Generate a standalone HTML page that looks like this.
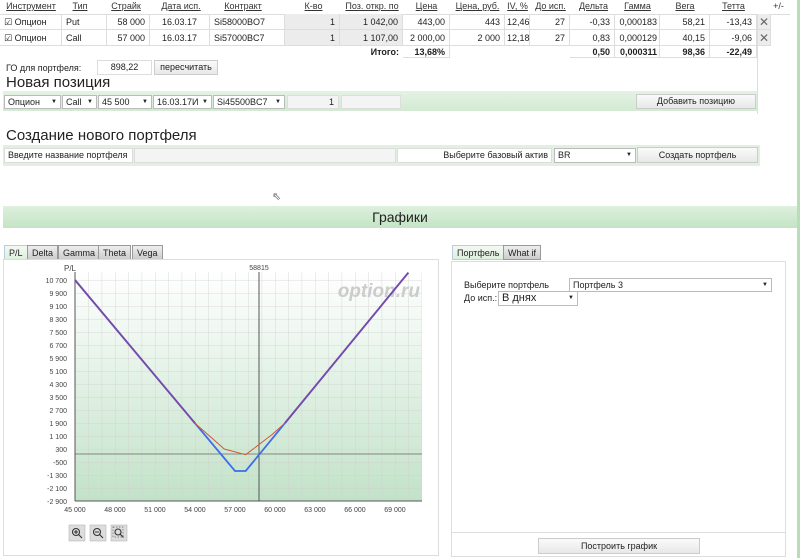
<!DOCTYPE html>
<html><head><meta charset="utf-8"><style>
*{box-sizing:border-box;margin:0;padding:0}
body{width:800px;height:558px;overflow:hidden;background:#fff;font-family:"Liberation Sans","DejaVu Sans",sans-serif;font-size:9px;color:#222;position:relative}
.a{position:absolute;white-space:nowrap}
.h{text-decoration:underline;color:#333;text-align:center}
.c{position:absolute;height:16px;line-height:16px;padding:0 4px;border-right:1px solid #ddd;border-bottom:1px solid #ddd;white-space:nowrap}
.r{text-align:right}
.g{background:#ececec}
.sel{position:absolute;height:14px;line-height:13px;border:1px solid #bbb;background:#fff;padding:0 3px;font-size:9px}
.sel:after{content:"▼";position:absolute;right:3px;font-size:6px}
.btn{position:absolute;border:1px solid #ccc;background:linear-gradient(#fafafa,#e8e8e8);text-align:center;font-size:9px}
.tab{position:absolute;top:245px;height:15px;line-height:14px;border:1px solid #999;background:linear-gradient(#eee,#ccc);padding:0 4px;font-size:9px}
.tab.on{background:linear-gradient(#f4f9f4,#dcefdc);border-color:#bcd}
</style></head><body>
<div class="a" style="left:797px;top:0;width:3px;height:558px;background:#b9dcb9"></div>
<div class="a h" style="left:0;top:1px;width:62px">Инструмент</div>
<div class="a h" style="left:62px;top:1px;width:36px">Тип</div>
<div class="a h" style="left:105px;top:1px;width:42px">Страйк</div>
<div class="a h" style="left:150px;top:1px;width:62px">Дата исп.</div>
<div class="a h" style="left:212px;top:1px;width:62px">Контракт</div>
<div class="a h" style="left:285px;top:1px;width:57px">К-во</div>
<div class="a h" style="left:342px;top:1px;width:60px">Поз. откр. по</div>
<div class="a h" style="left:403px;top:1px;width:47px">Цена</div>
<div class="a h" style="left:450px;top:1px;width:55px">Цена, руб.</div>
<div class="a h" style="left:505px;top:1px;width:25px">IV, %</div>
<div class="a h" style="left:531px;top:1px;width:39px">До исп.</div>
<div class="a h" style="left:572px;top:1px;width:43px">Дельта</div>
<div class="a h" style="left:615px;top:1px;width:45px">Гамма</div>
<div class="a h" style="left:660px;top:1px;width:50px">Вега</div>
<div class="a h" style="left:710px;top:1px;width:47px">Тетта</div>
<div class="a" style="left:757px;top:1px;width:43px;text-align:center;color:#333">+/-</div>
<div class="a" style="left:0;top:14px;width:790px;height:1px;background:#ddd"></div>
<div class="c" style="left:0;top:14px;width:62px">☑ Опцион</div><div class="c" style="left:62px;top:14px;width:45px">Put</div><div class="c r" style="left:107px;top:14px;width:43px">58 000</div><div class="c" style="left:150px;top:14px;width:60px;text-align:center">16.03.17</div><div class="c" style="left:210px;top:14px;width:75px">Si58000BO7</div><div class="c r g" style="left:285px;top:14px;width:55px">1</div><div class="c r g" style="left:340px;top:14px;width:63px">1 042,00</div><div class="c r" style="left:403px;top:14px;width:47px">443,00</div><div class="c r" style="left:450px;top:14px;width:55px">443</div><div class="c r" style="left:505px;top:14px;width:25px;padding:0 2px">12,46</div><div class="c r" style="left:530px;top:14px;width:40px">27</div><div class="c r" style="left:570px;top:14px;width:45px">-0,33</div><div class="c r" style="left:615px;top:14px;width:45px;padding:0 2px">0,000183</div><div class="c r" style="left:660px;top:14px;width:50px">58,21</div><div class="c r" style="left:710px;top:14px;width:47px">-13,43</div><div class="c g" style="left:757px;top:14px;width:14px;color:#666;font-size:12px;padding:0 2px">✕</div>
<div class="c" style="left:0;top:30px;width:62px">☑ Опцион</div><div class="c" style="left:62px;top:30px;width:45px">Call</div><div class="c r" style="left:107px;top:30px;width:43px">57 000</div><div class="c" style="left:150px;top:30px;width:60px;text-align:center">16.03.17</div><div class="c" style="left:210px;top:30px;width:75px">Si57000BC7</div><div class="c r g" style="left:285px;top:30px;width:55px">1</div><div class="c r g" style="left:340px;top:30px;width:63px">1 107,00</div><div class="c r" style="left:403px;top:30px;width:47px">2 000,00</div><div class="c r" style="left:450px;top:30px;width:55px">2 000</div><div class="c r" style="left:505px;top:30px;width:25px;padding:0 2px">12,18</div><div class="c r" style="left:530px;top:30px;width:40px">27</div><div class="c r" style="left:570px;top:30px;width:45px">0,83</div><div class="c r" style="left:615px;top:30px;width:45px;padding:0 2px">0,000129</div><div class="c r" style="left:660px;top:30px;width:50px">40,15</div><div class="c r" style="left:710px;top:30px;width:47px">-9,06</div><div class="c g" style="left:757px;top:30px;width:14px;color:#666;font-size:12px;padding:0 2px">✕</div>
<div class="c r" style="left:340px;top:46px;width:63px;font-weight:bold;border:0;height:12px;line-height:12px">Итого:</div>
<div class="c r" style="left:403px;top:46px;width:47px;font-weight:bold;height:12px;line-height:12px">13,68%</div>
<div class="c r" style="left:570px;top:46px;width:45px;font-weight:bold;height:12px;line-height:12px">0,50</div>
<div class="c r" style="left:615px;top:46px;width:45px;font-weight:bold;height:12px;line-height:12px;padding:0 2px">0,000311</div>
<div class="c r" style="left:660px;top:46px;width:50px;font-weight:bold;height:12px;line-height:12px">98,36</div>
<div class="c r" style="left:710px;top:46px;width:47px;font-weight:bold;height:12px;line-height:12px">-22,49</div>
<div class="a" style="left:757px;top:14px;width:1px;height:100px;background:#ddd"></div>
<div class="a" style="left:6px;top:63px">ГО для портфеля:</div>
<div class="a" style="left:97px;top:60px;width:55px;height:15px;border:1px solid #ddd;text-align:center;line-height:13px">898,22</div>
<div class="btn" style="left:154px;top:60px;width:64px;height:15px;line-height:13px">пересчитать</div>
<div class="a" style="left:6px;top:74px;font-size:15px">Новая позиция</div>
<div class="a" style="left:3px;top:91px;width:754px;height:20px;background:linear-gradient(#e4f2e4,#d3ead3)"></div>
<div class="sel" style="left:4px;top:95px;width:57px">Опцион</div>
<div class="sel" style="left:62px;top:95px;width:35px">Call</div>
<div class="sel" style="left:98px;top:95px;width:54px">45 500</div>
<div class="sel" style="left:153px;top:95px;width:59px">16.03.17И</div>
<div class="sel" style="left:213px;top:95px;width:72px">Si45500BC7</div>
<div class="a" style="left:287px;top:95px;width:52px;height:14px;background:#f4f4f4;border:1px solid #ddd;text-align:right;padding-right:4px;line-height:12px">1</div>
<div class="a" style="left:341px;top:95px;width:60px;height:14px;background:#f4f4f4;border:1px solid #ddd"></div>
<div class="btn" style="left:636px;top:94px;width:120px;height:15px;line-height:13px">Добавить позицию</div>
<div class="a" style="left:6px;top:127px;font-size:15px">Создание нового портфеля</div>
<div class="a" style="left:3px;top:145px;width:757px;height:21px;background:#e2f0e2"></div>
<div class="a" style="left:4px;top:148px;width:129px;height:15px;background:#fff;border:1px solid #ddd;padding-left:3px;line-height:13px">Введите название портфеля</div>
<div class="a" style="left:134px;top:148px;width:262px;height:15px;background:#f4f4f4;border:1px solid #ddd"></div>
<div class="a" style="left:397px;top:148px;width:155px;height:15px;background:#fff;border:1px solid #ddd;text-align:right;padding-right:3px;line-height:13px">Выберите базовый актив</div>
<div class="sel" style="left:554px;top:148px;width:82px;height:15px">BR</div>
<div class="btn" style="left:637px;top:147px;width:121px;height:16px;line-height:14px">Создать портфель</div>
<div class="a" style="left:272px;top:190px;font-size:11px;color:#666">⇖</div>
<div class="a" style="left:3px;top:206px;width:794px;height:22px;background:linear-gradient(#ddf0dd,#c4e4c4);text-align:center;font-size:14px;line-height:22px">Графики</div>
<div class="tab on" style="left:4px">P/L</div>
<div class="tab" style="left:27px">Delta</div>
<div class="tab" style="left:58px">Gamma</div>
<div class="tab" style="left:98px">Theta</div>
<div class="tab" style="left:132px">Vega</div>
<div class="a" style="left:3px;top:259px;width:436px;height:297px;border:1px solid #ddd"></div>
<svg class="a" style="left:0;top:260px" width="440" height="298" viewBox="0 260 440 298">
<defs>
<linearGradient id="bg" x1="0" y1="0" x2="0" y2="1"><stop offset="0" stop-color="#fff"/><stop offset="1" stop-color="#c2e2c8"/></linearGradient>
<pattern id="gr" x="75" y="280" width="13.333" height="13" patternUnits="userSpaceOnUse"><path d="M0 0H13.333M0 0V13" stroke="#d0d0d0" stroke-width="0.8" fill="none"/></pattern>
</defs>
<rect x="75" y="272" width="347" height="229" fill="url(#bg)"/>
<rect x="75" y="272" width="347" height="229" fill="url(#gr)"/>
<text x="420" y="297" font-size="19" font-style="italic" font-weight="bold" fill="#ccc" text-anchor="end" font-family="Liberation Sans">option.ru</text>
<line x1="75" y1="454" x2="422" y2="454" stroke="#666" stroke-width="0.8"/>
<line x1="259" y1="272" x2="259" y2="501" stroke="#555" stroke-width="1"/>
<line x1="75" y1="272" x2="75" y2="501" stroke="#555"/>
<line x1="75" y1="501" x2="422" y2="501" stroke="#555"/>
<text x="64" y="271" font-size="8" fill="#444">P/L</text>
<text x="259" y="270" font-size="7" fill="#444" text-anchor="middle">58815</text>
<g font-size="7" fill="#444" text-anchor="end">
<text x="67" y="283">10 700</text><text x="67" y="296">9 900</text><text x="67" y="309">9 100</text><text x="67" y="322">8 300</text><text x="67" y="335">7 500</text><text x="67" y="348">6 700</text><text x="67" y="361">5 900</text><text x="67" y="374">5 100</text><text x="67" y="387">4 300</text><text x="67" y="400">3 500</text><text x="67" y="413">2 700</text><text x="67" y="426">1 900</text><text x="67" y="439">1 100</text><text x="67" y="452">300</text><text x="67" y="465">-500</text><text x="67" y="478">-1 300</text><text x="67" y="491">-2 100</text><text x="67" y="504">-2 900</text>
</g>
<g font-size="7" fill="#444" text-anchor="middle">
<text x="75" y="512">45 000</text><text x="115" y="512">48 000</text><text x="155" y="512">51 000</text><text x="195" y="512">54 000</text><text x="235" y="512">57 000</text><text x="275" y="512">60 000</text><text x="315" y="512">63 000</text><text x="355" y="512">66 000</text><text x="395" y="512">69 000</text>
</g>
<polyline points="75,280 235,471 245.7,471 408.3,272.7" fill="none" stroke="#3b6ee8" stroke-width="1.8"/>
<polyline points="195,423.3 224.3,449 245.7,454.7 272.3,434.4 285,423" fill="none" stroke="#d05a3a" stroke-width="1"/>
<polyline points="75,280 195,423.3" fill="none" stroke="#7a4aa8" stroke-width="1.8"/>
<polyline points="285,423 408.3,272.7" fill="none" stroke="#7a4aa8" stroke-width="1.8"/>
<g fill="#ddd" stroke="#aaa" stroke-width="0.5">
<rect x="69" y="525" width="16" height="16"/><rect x="90" y="525" width="16" height="16"/><rect x="111" y="525" width="16" height="16"/></g>
<g fill="none" stroke="#333" stroke-width="1.1">
<circle cx="76" cy="532" r="3.5"/><path d="M78.5 534.5l3.5 3.5M74 532h4M76 530v4"/>
<circle cx="97" cy="532" r="3.5"/><path d="M99.5 534.5l3.5 3.5M95 532h4"/>
<circle cx="118" cy="532" r="3"/><path d="M120 534l3.5 3.5"/><rect x="113" y="527" width="10" height="10" stroke-dasharray="1.5 1.5" stroke="#666" stroke-width="0.7"/>
</g>
</svg>
<div class="tab on" style="left:452px">Портфель</div>
<div class="tab" style="left:503px">What if</div>
<div class="a" style="left:451px;top:261px;width:335px;height:296px;border:1px solid #ddd"></div>
<div class="a" style="left:464px;top:280px">Выберите портфель</div>
<div class="sel" style="left:569px;top:278px;width:203px">Портфель 3</div>
<div class="a" style="left:464px;top:293px">До исп.:</div>
<div class="sel" style="left:498px;top:291px;width:80px;height:15px;font-size:11px;line-height:13px">В днях</div>
<div class="a" style="left:452px;top:532px;width:334px;height:1px;background:#ddd"></div>
<div class="btn" style="left:538px;top:538px;width:162px;height:16px;line-height:14px">Построить график</div>
</body></html>
